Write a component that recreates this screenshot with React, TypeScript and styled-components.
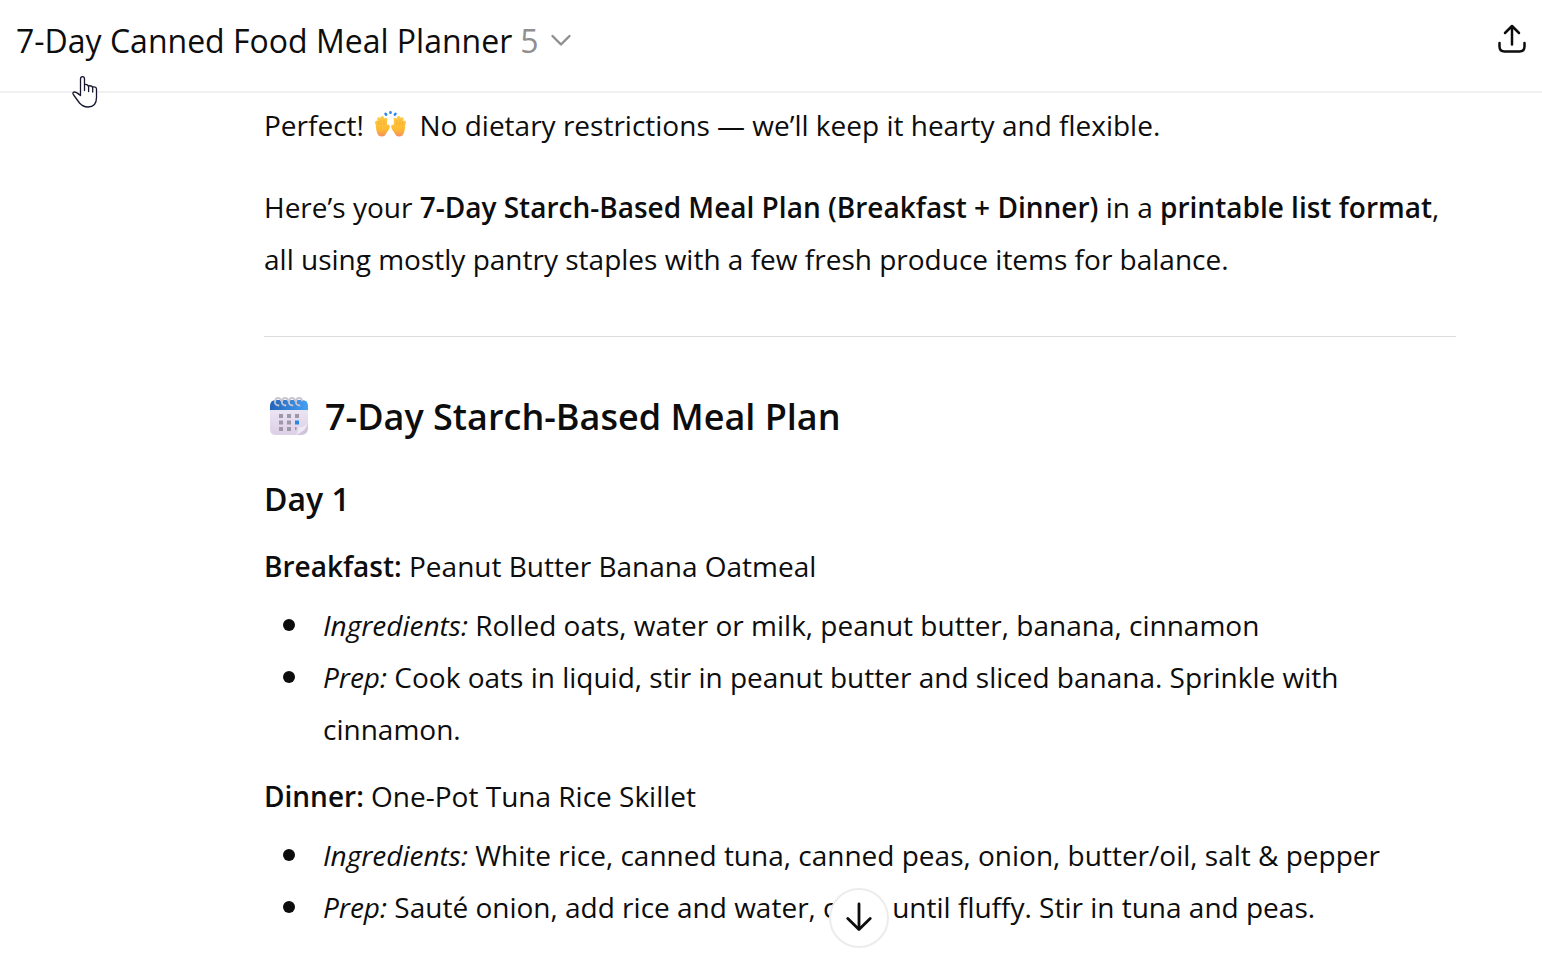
import React from 'react';
import styled, { createGlobalStyle } from 'styled-components';

const GlobalStyle = createGlobalStyle`
  *, *::before, *::after { box-sizing: border-box; }
  body {
    margin: 0;
    background: #fff;
    color: #0d0d0d;
    font-family: "Open Sans", "Noto Sans", sans-serif;
    font-size: 28px;
    line-height: 52px;
  }
`;

const Page = styled.div`
  position: relative;
  height: 100vh;
  display: flex;
  flex-direction: column;
  overflow: hidden;
`;

const Header = styled.header`
  flex: none;
  display: flex;
  align-items: center;
  justify-content: space-between;
  height: 93px;
  padding: 0 16px 10px;
  border-bottom: 2px solid #f1f1f1;
`;

const TitleButton = styled.button`
  display: flex;
  align-items: center;
  padding: 0;
  border: 0;
  background: none;
  color: inherit;
  font: inherit;
  font-size: 32px;
  white-space: nowrap;
  cursor: pointer;
`;

const Version = styled.span`
  margin: 0 11px 0 8px;
  color: #8f8f8f;
`;

const IconButton = styled.button`
  display: flex;
  padding: 0 0 4px;
  border: 0;
  background: none;
  color: inherit;
  cursor: pointer;
`;

const Content = styled.main`
  flex: 1;
  min-height: 0;
  overflow: hidden;
  padding: 6px 86px 32px 264px;
`;

const Paragraph = styled.p`
  margin: 0 0 30px;
`;

const Strong = styled.strong`
  font-weight: 600;
`;

const Divider = styled.hr`
  height: 1px;
  margin: 51px 0 54px;
  border: 0;
  background: #dcdcdc;
`;

const PlanTitle = styled.h2`
  display: flex;
  align-items: center;
  gap: 16px;
  margin: 0 0 30px;
  padding-left: 5px;
  font-size: 36px;
  font-weight: 600;
  line-height: 52px;
`;

const DayTitle = styled.h3`
  margin: 0 0 15px;
  font-size: 32px;
  font-weight: 600;
  line-height: 52px;
`;

const MealTitle = styled.p`
  margin: 0 0 7px;
`;

const MealList = styled.ul`
  margin: 0 0 15px;
  padding: 0;
  list-style: none;
`;

const MealItem = styled.li`
  display: grid;
  grid-template-columns: 59px 1fr;

  &::before {
    content: "";
    width: 12px;
    height: 12px;
    margin: 20px 19px;
    border-radius: 50%;
    background: #0d0d0d;
  }
`;

const InlineIcon = styled.svg`
  margin: 0 5px 0 3px;
  vertical-align: -2px;
`;

const Pointer = styled.svg`
  position: absolute;
  top: 75px;
  left: 71px;
  pointer-events: none;
`;

const ScrollButton = styled.button`
  position: absolute;
  bottom: 20px;
  left: calc(50% + 58px);
  display: flex;
  align-items: center;
  justify-content: center;
  width: 60px;
  height: 60px;
  padding: 0 0 2px;
  border: 2px solid #ececec;
  border-radius: 50%;
  background: #fff;
  color: #0d0d0d;
  cursor: pointer;
`;

const RaisedHands = () => (
  <InlineIcon width="33" height="28" viewBox="0 0 33 28" role="img" aria-label="Raised hands">
    <defs>
      <linearGradient id="palm" gradientUnits="userSpaceOnUse" x1="0" y1="6" x2="0" y2="27">
        <stop offset="0" stopColor="#ffcb45" />
        <stop offset="0.65" stopColor="#fdb932" />
        <stop offset="1" stopColor="#f28c66" />
      </linearGradient>
      <g id="hand">
        <g stroke="url(#palm)" strokeWidth="3.400" strokeLinecap="round" fill="none">
          <path d="M6 19 2.700 12.500M7 17 5 9M9 17 8.300 7.600M11 18l.7-8.600M11 22q2.500-2 3.200-5.500" />
        </g>
        <path d="M1.800 13q5-2.500 11.300 0l.3 6q-.5 4-2.400 6.500-3 2.200-6.500 0Q1.500 21 1.800 13Z" fill="url(#palm)" />
        <path d="M4.200 11.500l.8 3M6.800 10.500l.5 4M10 10.500v4" stroke="#f0a22e" strokeWidth=".7" strokeLinecap="round" />
      </g>
    </defs>
    <use href="#hand" />
    <use href="#hand" transform="translate(33 0) scale(-1 1)" />
    <g stroke="#2b86e6" strokeWidth="2.600" strokeLinecap="round">
      <path d="M16.500 2.200v.600M11.600 3.900l.5.700M21.400 3.900l-.5.700" />
    </g>
  </InlineIcon>
);

const Calendar = () => (
  <svg width="40" height="40" viewBox="0 0 40 40" role="img" aria-label="Calendar">
    <defs>
      <linearGradient id="sheet" x1="0" y1="0" x2="0" y2="1">
        <stop offset="0" stopColor="#ece6f4" />
        <stop offset="1" stopColor="#dccfe6" />
      </linearGradient>
      <linearGradient id="band" x1="0" y1="0" x2="1" y2="0">
        <stop offset="0" stopColor="#2264bb" />
        <stop offset="1" stopColor="#45a0f4" />
      </linearGradient>
    </defs>
    <path d="M1 11h38v16L28 38H7q-6 0-6-6Z" fill="url(#sheet)" />
    <path d="M1 13V9q0-6 6-6h26q6 0 6 6v4Z" fill="url(#band)" />
    <path d="M27 38q5-2 12-12v5q0 7-7 7Z" fill="#d0c3da" />
    <path d="M26 38q3.500-2 3.500-7.500Q35 31 39 25.500 38 34 26 38Z" fill="#efe9f4" />
    <g fill="#9d98a7">
      <path d="M10 17h4v4h-4zM18 17h4v4h-4zM26 17h4v4h-4zM10 23.500h4v4h-4zM18 23.500h4v4h-4zM10 30h4v4h-4zM18 30h4v4h-4zM26 30h1.500v3H26z" />
    </g>
    <path d="M26 23.500h4v4h-4z" fill="#2788e3" />
    <g fill="none" stroke="#c9c5d0" strokeWidth="1.800" strokeLinecap="round">
      <path d="M12 3.500Q11.500 1 9 1T6 4.500t3.500 4M19 3.500Q18.500 1 16 1t-3 3.500 3.500 4M26 3.500Q25.500 1 23 1t-3 3.500 3.500 4M33 3.500Q32.500 1 30 1t-3 3.500 3.500 4" />
    </g>
  </svg>
);

type MealProps = { name: string; dish: string; ingredients: string; prep: string };

const Meal = ({ name, dish, ingredients, prep }: MealProps) => (
  <>
    <MealTitle><Strong>{name}:</Strong> {dish}</MealTitle>
    <MealList>
      <MealItem><span><em>Ingredients:</em> {ingredients}</span></MealItem>
      <MealItem><span><em>Prep:</em> {prep}</span></MealItem>
    </MealList>
  </>
);

export default function App() {
  return (
    <Page>
      <GlobalStyle />
      <Header>
        <TitleButton type="button">
          7-Day Canned Food Meal Planner
          <Version>5</Version>
          <svg width="22" height="14" viewBox="0 0 22 14" fill="none" stroke="#8f8f8f" strokeWidth="2.400" strokeLinecap="round" strokeLinejoin="round" aria-hidden="true">
            <path d="m2.500 2 8.500 8.500L19.500 2" />
          </svg>
        </TitleButton>
        <IconButton type="button" aria-label="Share">
          <svg width="28" height="30" viewBox="0 0 28 30" fill="none" stroke="currentColor" strokeWidth="2.500" strokeLinecap="round" strokeLinejoin="round">
            <path d="M14 20.500V2M7 9l7-7 7 7M1.500 19v3.500q0 5 5 5h15q5 0 5-5V19" />
          </svg>
        </IconButton>
      </Header>
      <Content>
        <Paragraph>Perfect! <RaisedHands /> No dietary restrictions — we’ll keep it hearty and flexible.</Paragraph>
        <Paragraph>
          Here’s your <Strong>7-Day Starch-Based Meal Plan (Breakfast + Dinner)</Strong> in a{' '}
          <Strong>printable list format</Strong>, all using mostly pantry staples with a few fresh produce items for balance.
        </Paragraph>
        <Divider />
        <PlanTitle><Calendar />7-Day Starch-Based Meal Plan</PlanTitle>
        <DayTitle>Day 1</DayTitle>
        <Meal
          name="Breakfast"
          dish="Peanut Butter Banana Oatmeal"
          ingredients="Rolled oats, water or milk, peanut butter, banana, cinnamon"
          prep="Cook oats in liquid, stir in peanut butter and sliced banana. Sprinkle with cinnamon."
        />
        <Meal
          name="Dinner"
          dish="One-Pot Tuna Rice Skillet"
          ingredients="White rice, canned tuna, canned peas, onion, butter/oil, salt & pepper"
          prep="Sauté onion, add rice and water, cook until fluffy. Stir in tuna and peas."
        />
      </Content>
      <ScrollButton type="button" aria-label="Scroll to bottom">
        <svg width="26" height="30" viewBox="0 0 26 30" fill="none" stroke="currentColor" strokeWidth="2.800" strokeLinecap="round" strokeLinejoin="round">
          <path d="M13 2v25.500M1.800 16.500 13 27.500l11.200-11" />
        </svg>
      </ScrollButton>
      <Pointer width="28" height="34" viewBox="0 0 28 34" fill="#fff" stroke="#15162b" strokeWidth="1.300" strokeLinecap="round" strokeLinejoin="round" aria-hidden="true">
        <path d="M9.500 20.500V4q0-2.300 2-2.300t2 2.300v11.500V9.500q3.700-.3 4.100 2.500v4.500V10.800q3.500-.4 4.100 1.700v4.500V12q3.800-.6 3.800 2.300v8.200q0 9.500-8.500 9.500-5 0-8.500-4L3 20.500Q1 18 2.500 17.200q2-1 7 3.300Z" />
      </Pointer>
    </Page>
  );
}
